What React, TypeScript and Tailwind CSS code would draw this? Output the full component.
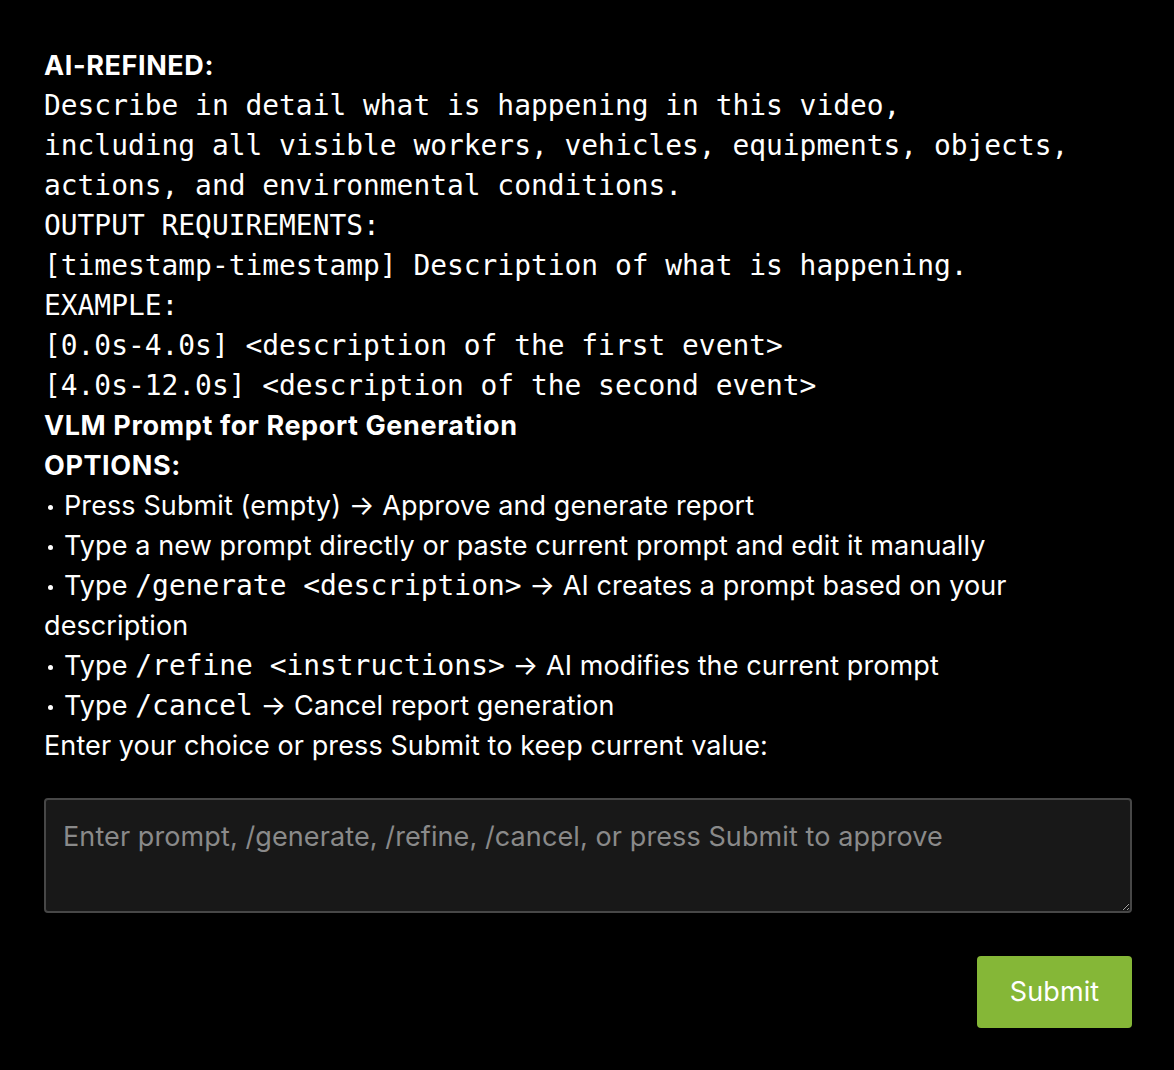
import { useState } from 'react';

const MONO = "font-['DejaVu_Sans_Mono',monospace] text-[27.9px] tracking-normal";

const PROMPT_LINES = [
  'Describe in detail what is happening in this video,',
  'including all visible workers, vehicles, equipments, objects,',
  'actions, and environmental conditions.',
  'OUTPUT REQUIREMENTS:',
  '[timestamp-timestamp] Description of what is happening.',
  'EXAMPLE:',
  '[0.0s-4.0s] <description of the first event>',
  '[4.0s-12.0s] <description of the second event>',
];

function Cmd({ children }: { children: string }) {
  return <code className={MONO}>{children}</code>;
}

function Dot() {
  return <span className="inline-block w-[5px] h-[5px] rounded-full bg-white align-middle ml-[4px] mr-[11px]" />;
}

export default function App() {
  const [value, setValue] = useState('');

  return (
    <div className="min-h-[1070px] bg-black text-white font-['Inter',sans-serif] text-[27px] tracking-[0.1px] leading-[40px] pl-[44px] pr-[42px] pt-[46px] pb-[43px]">
      <div>
        <div className="font-bold tracking-[0.6px]">AI-REFINED:</div>
        <pre className={`${MONO} whitespace-pre-wrap leading-[40px]`}>{PROMPT_LINES.join('\n')}</pre>
        <div className="font-bold tracking-[0.6px]">VLM Prompt for Report Generation</div>
        <div className="font-bold tracking-[0.6px]">OPTIONS:</div>
        <div><Dot />Press Submit (empty) → Approve and generate report</div>
        <div><Dot />Type a new prompt directly or paste current prompt and edit it manually</div>
        <div>
          <Dot />Type <Cmd>/generate &lt;description&gt;</Cmd> → AI creates a prompt based on your description
        </div>
        <div>
          <Dot />Type <Cmd>/refine &lt;instructions&gt;</Cmd> → AI modifies the current prompt
        </div>
        <div>
          <Dot />Type <Cmd>/cancel</Cmd> → Cancel report generation
        </div>
        <div>Enter your choice or press Submit to keep current value:</div>
      </div>

      <textarea
        value={value}
        onChange={(e) => setValue(e.target.value)}
        placeholder="Enter prompt, /generate, /refine, /cancel, or press Submit to approve"
        className="mt-[32px] block w-full h-[115px] bg-[#181818] border-2 border-[#474747] rounded-[4px] px-[17px] py-[19px] text-[27px] tracking-[0.1px] leading-[36px] text-white placeholder:text-[#8a8a8a] outline-none"
      />

      <div className="flex justify-end mt-[43px]">
        <button className="w-[155px] h-[72px] rounded-[4px] bg-[#85b737] text-white text-[27px] font-['Inter',sans-serif]">
          Submit
        </button>
      </div>
    </div>
  );
}
